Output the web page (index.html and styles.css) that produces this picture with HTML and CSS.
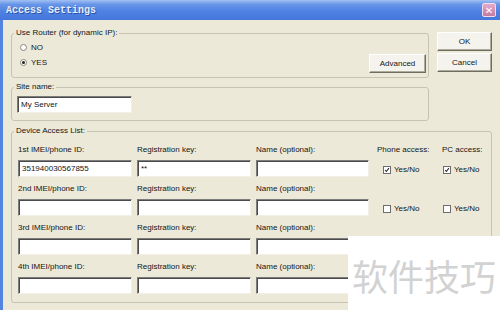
FILE: index.html
```html
<!DOCTYPE html>
<html lang="en">
<head>
    <meta charset="UTF-8">
    <title>Access Settings</title>
    <link rel="stylesheet" href="styles.css">
</head>
<body>

    <div class="window">
        <div class="titlebar">
            <span class="title">Access Settings</span>
            <span class="close">&#10005;</span>
        </div>

        <div class="frame">
            <div class="client">
                <div class="top">
                    <div class="left">
                        <fieldset class="group router">
                            <legend>Use Router (for dynamic IP):</legend>
                            <div class="body">
                                <div class="radios">
                                    <div class="radio"><span class="dot"></span>NO</div>
                                    <div class="radio on"><span class="dot"></span>YES</div>
                                </div>
                                <button class="btn adv">Advanced</button>
                            </div>
                        </fieldset>

                        <fieldset class="group site">
                            <legend>Site name:</legend>
                            <div class="body">
                                <div class="field site-field">My Server</div>
                            </div>
                        </fieldset>
                    </div>

                    <div class="actions">
                        <button class="btn">OK</button>
                        <button class="btn">Cancel</button>
                    </div>
                </div>

                <fieldset class="group devices">
                    <legend>Device Access List:</legend>
                    <div class="body grid">
                        <div class="lbl">1st IMEI/phone ID:</div>
                        <div class="lbl">Registration key:</div>
                        <div class="lbl">Name (optional):</div>
                        <div class="lbl phone">Phone access:</div>
                        <div class="lbl pc">PC access:</div>
                        <div class="field">351940030567855</div>
                        <div class="field">**</div>
                        <div class="field"></div>
                        <div class="chk phone"><span class="box checked"><svg viewBox="0 0 8 8"><polyline points="1.5,4 3.2,6 6.5,1.5"/></svg></span>Yes/No</div>
                        <div class="chk pc"><span class="box checked"><svg viewBox="0 0 8 8"><polyline points="1.5,4 3.2,6 6.5,1.5"/></svg></span>Yes/No</div>

                        <div class="lbl">2nd IMEI/phone ID:</div>
                        <div class="lbl">Registration key:</div>
                        <div class="lbl">Name (optional):</div>
                        <div class="lbl"></div>
                        <div class="lbl"></div>
                        <div class="field"></div>
                        <div class="field"></div>
                        <div class="field"></div>
                        <div class="chk phone"><span class="box"></span>Yes/No</div>
                        <div class="chk pc"><span class="box"></span>Yes/No</div>

                        <div class="lbl">3rd IMEI/phone ID:</div>
                        <div class="lbl">Registration key:</div>
                        <div class="lbl">Name (optional):</div>
                        <div class="lbl"></div>
                        <div class="lbl"></div>
                        <div class="field"></div>
                        <div class="field"></div>
                        <div class="field"></div>
                        <div class="chk phone"><span class="box"></span></div>
                        <div class="chk pc"><span class="box"></span></div>

                        <div class="lbl">4th IMEI/phone ID:</div>
                        <div class="lbl">Registration key:</div>
                        <div class="lbl">Name (optional):</div>
                        <div class="lbl"></div>
                        <div class="lbl"></div>
                        <div class="field"></div>
                        <div class="field"></div>
                        <div class="field"></div>
                        <div class="chk phone"><span class="box"></span></div>
                        <div class="chk pc"><span class="box"></span></div>
                    </div>
                </fieldset>
            </div>
        </div>

        <div class="watermark">软件技巧</div>
    </div>

</body>
</html>
```

FILE: styles.css
```css
* {
    margin: 0;
    padding: 0;
    box-sizing: border-box;
}

body {
    width: 500px;
    height: 310px;
    overflow: hidden;
    background: #ece9d8;
    color: #151515;
    font-family: "Liberation Sans", Arial, sans-serif;
    font-size: 8px;
}

.window {
    position: relative;
    width: 500px;
    height: 310px;
    display: flex;
    flex-direction: column;
}

.titlebar {
    height: 20px;
    display: flex;
    align-items: center;
    justify-content: space-between;
    padding: 0 4px 0 6px;
    background: linear-gradient(#a2c0f3 0%, #6795e8 22%, #4f82e2 55%, #4476dc 100%);
}

.title {
    font-family: "Liberation Mono", monospace;
    font-weight: bold;
    font-size: 10px;
    color: #e6eefc;
    text-shadow: 1px 1px 0 #2c52ad;
}

.close {
    width: 14px;
    height: 14px;
    display: flex;
    align-items: center;
    justify-content: center;
    border: 1px solid #f3dbe8;
    border-radius: 2px;
    background: linear-gradient(#e4aacb, #c57aa3);
    color: #fff;
    font-family: "DejaVu Sans", sans-serif;
    font-size: 10px;
    font-weight: bold;
}

.frame {
    flex: 1;
    display: flex;
    border-left: 3px solid #5384e0;
}

.client {
    flex: 1;
    padding: 8px 8px 0 8px;
    display: flex;
    flex-direction: column;
}

.top {
    display: flex;
    gap: 8px;
}

.left {
    width: 418px;
    display: flex;
    flex-direction: column;
    gap: 4px;
}

.actions {
    width: 55px;
    display: flex;
    flex-direction: column;
    gap: 2px;
    padding-top: 4px;
}

/* group boxes */
.group {
    border: 1px solid #c6c3b3;
    border-radius: 3px;
    padding: 0;
    min-width: 0;
}

.group legend {
    margin-left: 2px;
    padding: 0 2px;
    line-height: 10px;
}

.router .body {
    display: flex;
    justify-content: space-between;
    align-items: flex-end;
    padding: 3px 2px 4px 8px;
}

.radios {
    display: flex;
    flex-direction: column;
    gap: 2px;
    padding-bottom: 4px;
}

.radio {
    height: 13px;
    display: flex;
    align-items: center;
    gap: 4px;
}

.dot {
    width: 7px;
    height: 7px;
    border-radius: 50%;
    border: 1px solid #8a887c;
    background: #fff;
    display: flex;
    align-items: center;
    justify-content: center;
}

.radio.on .dot::after {
    content: "";
    width: 3px;
    height: 3px;
    border-radius: 50%;
    background: #222;
}

.btn {
    height: 19px;
    font: inherit;
    color: #151515;
    background: #f4f3ee;
    border: 1px solid;
    border-color: #ffffff #6f6d62 #6f6d62 #ffffff;
    box-shadow: inset -1px -1px 0 #aeab9c;
}

.adv {
    width: 57px;
}

.site .body {
    padding: 4px 0 7px 5px;
}

.field {
    height: 17px;
    background: #fff;
    border: 1px solid;
    border-color: #7c7c7c #f1efe6 #f1efe6 #7c7c7c;
    box-shadow: inset 1px 1px 0 #4a4a4a;
    padding: 2px 0 0 3px;
    line-height: 12px;
    white-space: nowrap;
    overflow: hidden;
}

.site-field {
    width: 115px;
}

.devices {
    margin-top: 5px;
}

.grid {
    display: grid;
    grid-template-columns: 114px 114px 113px 63px 1fr;
    grid-template-rows: repeat(4, 12px 17px);
    column-gap: 5px;
    row-gap: 5px;
    padding: 7px 0 8px 6px;
}

.lbl {
    display: flex;
    align-items: center;
    white-space: nowrap;
}

.lbl.phone {
    padding-left: 3px;
}

.chk {
    display: flex;
    align-items: center;
    gap: 3px;
    padding-top: 2px;
}

.chk.phone {
    padding-left: 9px;
}

.chk.pc {
    padding-left: 1px;
}

.box {
    width: 8px;
    height: 8px;
    background: #fff;
    border: 1px solid #6d6d6d;
    display: flex;
}

.box svg {
    width: 100%;
    height: 100%;
    fill: none;
    stroke: #222;
    stroke-width: 1.4;
}

/* site watermark over the lower right corner */
.watermark {
    position: absolute;
    left: 348px;
    top: 236px;
    right: 0;
    bottom: 0;
    background: #fff;
    color: #d2d2d2;
    font-family: "Noto Sans CJK SC", sans-serif;
    font-size: 36px;
    display: flex;
    align-items: center;
    justify-content: center;
    padding-top: 4px;
}
```
